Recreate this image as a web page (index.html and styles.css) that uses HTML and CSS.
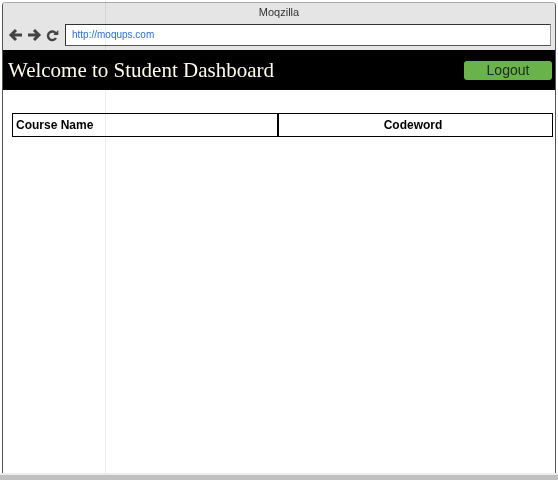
FILE: index.html
```html
<!DOCTYPE html>
<html>
<head>
<meta charset="utf-8">
<link rel="stylesheet" href="styles.css">
</head>
<body>
<div class="screen">
  <div class="window">
    <div class="chrome">
      <div class="title">Moqzilla</div>
      <div class="navrow">
        <svg class="icon" width="15" height="14" viewBox="0 0 15 14"><path d="M14 7H4M8 2L3 7l5 5" fill="none" stroke="#444" stroke-width="3"/></svg>
        <svg class="icon" width="15" height="14" viewBox="0 0 15 14"><path d="M1 7h10M7 2l5 5-5 5" fill="none" stroke="#444" stroke-width="3"/></svg>
        <svg class="icon reload" width="13" height="13" viewBox="0 0 13 13"><path d="M10.3 5.2A4.3 4.3 0 1 0 10 9" fill="none" stroke="#444" stroke-width="2.4"/><path d="M7.3 6h5V1z" fill="#444"/></svg>
        <div class="url">http://moqups.com</div>
      </div>
    </div>
    <div class="page">
      <header class="hero">
        <h1 class="hero-title">Welcome to Student Dashboard</h1>
        <button class="logout">Logout</button>
      </header>
      <table class="courses">
        <tr>
          <th class="col-name">Course Name</th>
          <th class="col-code">Codeword</th>
        </tr>
      </table>
    </div>
  </div>
  <div class="statusbar"></div>
  <div class="guide"></div>
</div>
</body>
</html>
```
FILE: styles.css
```css
html, body {
  margin: 0;
  padding: 0;
  background: #fff;
}
.screen {
  position: relative;
  width: 558px;
  height: 480px;
  overflow: hidden;
  display: flex;
  flex-direction: column;
  font-family: "Liberation Sans", Arial, sans-serif;
}
.window {
  margin: 2px 2px 0 2px;
  flex: 1;
  border: 1px solid #555;
  border-top-color: #a8a8a8;
  border-bottom: none;
  border-radius: 4px 4px 0 0;
  display: flex;
  flex-direction: column;
  background: #fff;
}
.chrome {
  background: #e5e5e5;
  height: 47px;
  display: flex;
  flex-direction: column;
  border-radius: 3px 3px 0 0;
}
.title {
  text-align: center;
  font-size: 11px;
  color: #333;
  padding-top: 2px;
  height: 19px;
  line-height: 14px;
}
.navrow {
  display: flex;
  align-items: center;
  padding-left: 5px;
  padding-right: 4px;
}
.icon {
  display: block;
  margin-right: 4px;
}
.reload {
  margin-right: 6px;
}
.url {
  flex: 1;
  height: 20px;
  border: 1px solid #333;
  border-right-color: #999;
  border-bottom-color: #555;
  background: #fff;
  font-size: 10px;
  color: #2f6fd6;
  line-height: 20px;
  padding-left: 6px;
}
.page {
  flex: 1;
  display: flex;
  flex-direction: column;
}
.hero {
  background: #000;
  height: 40px;
  display: flex;
  align-items: center;
  justify-content: space-between;
  padding: 0 3px 0 5px;
}
.hero-title {
  margin: 0;
  font-family: "Liberation Serif", "Times New Roman", serif;
  font-weight: normal;
  font-size: 21px;
  color: #fffbe8;
}
.logout {
  width: 88px;
  height: 19px;
  background: #6ab24a;
  border: none;
  border-radius: 3px;
  font-family: "Liberation Sans", Arial, sans-serif;
  font-size: 14px;
  color: #1e2a1e;
  padding: 0;
  line-height: 19px;
}
.courses {
  margin: 23px 2px 0 9px;
  border-collapse: collapse;
  width: calc(100% - 11px);
}
.courses th {
  border: 1px solid #000;
  height: 22px;
  font-size: 12px;
  font-weight: bold;
  color: #000;
  padding: 0 3px;
}
.col-name {
  text-align: left;
  width: 258px;
  border-right-width: 2px !important;
}
.courses .col-code {
  text-align: center;
  padding-right: 8px;
}
.statusbar {
  height: 5px;
  background: #c0c0c0;
  border-top: 2px solid #ececec;
}
.guide {
  position: absolute;
  left: 105px;
  top: 0;
  width: 1px;
  height: 473px;
  background: #ececec;
  mix-blend-mode: multiply;
}
```
